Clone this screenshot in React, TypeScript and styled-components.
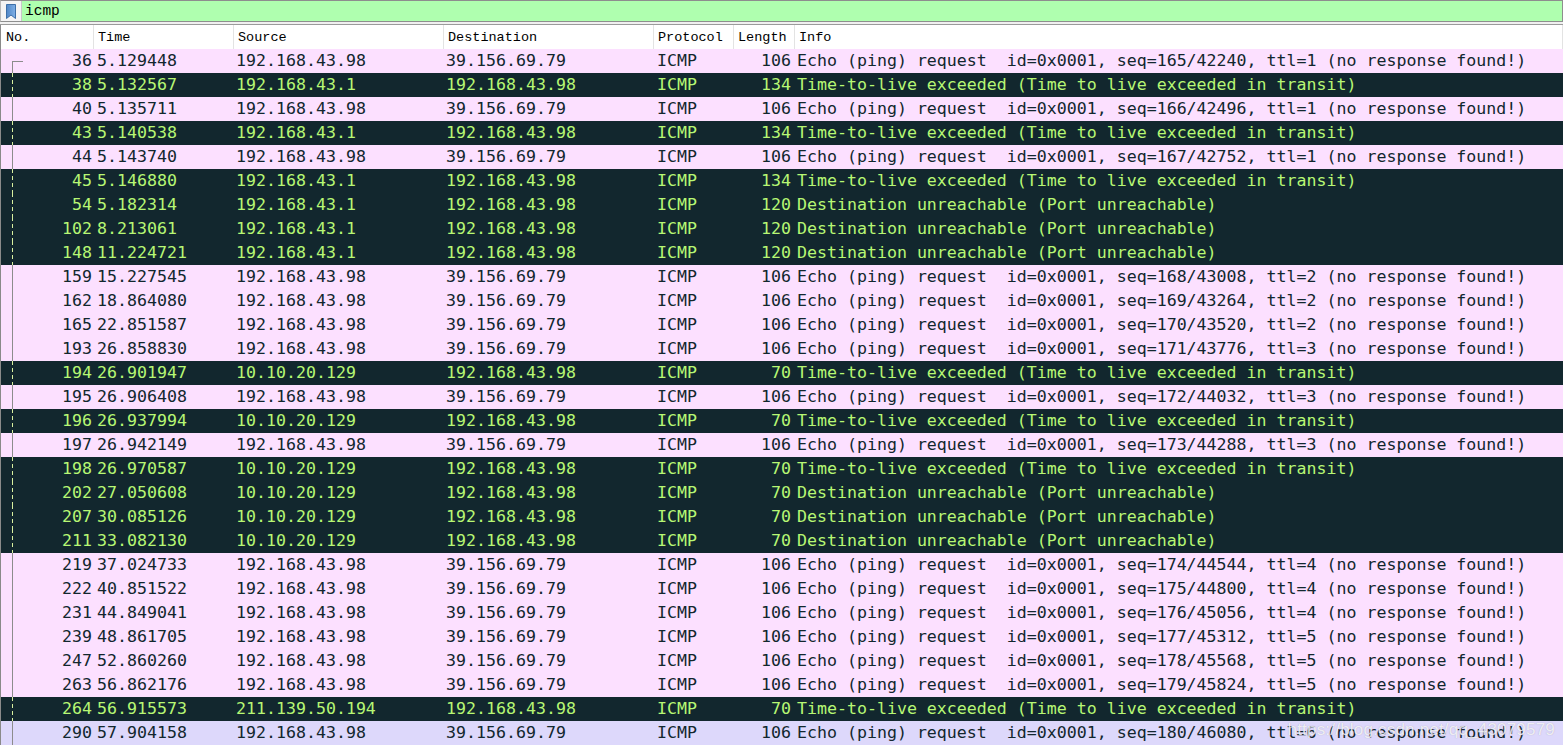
import * as React from "react";
import styled, { createGlobalStyle, css } from "styled-components";

const GlobalStyle = createGlobalStyle`
  html, body {
    margin: 0;
    padding: 0;
    background: #ffffff;
    overflow: hidden;
  }
`;

const mono = `"DejaVu Sans Mono", "Liberation Mono", monospace`;
const headMono = `"Liberation Mono", "DejaVu Sans Mono", monospace`;

const columns = "93px 140px 210px 210px 80px 61px 1fr";

const Page = styled.div`
  width: 1563px;
  height: 745px;
  display: flex;
  flex-direction: column;
  position: relative;
`;

const FilterBar = styled.div`
  height: 20px;
  display: flex;
  border: 1px solid #8e8e8e;
  border-left-color: #b8b8b8;
`;

const BookmarkButton = styled.div`
  width: 20px;
  display: flex;
  align-items: center;
  justify-content: center;
  background: #f4f4f4;
  border-right: 1px solid #c8c8c8;
`;

const FilterInput = styled.div`
  flex: 1;
  background: #afffaf;
  font-family: ${headMono};
  font-size: 14.5px;
  line-height: 20px;
  padding-left: 3px;
  color: #000;
`;

const Divider = styled.div`
  height: 2px;
  background: #f0f0f0;
  border-bottom: 1px solid #9a9a9a;
`;

const Table = styled.div`
  flex: 1;
  display: flex;
  flex-direction: column;
  border-left: 1px solid #8a8a8a;
  overflow: hidden;
`;

const HeaderRow = styled.div`
  display: grid;
  grid-template-columns: ${columns};
  height: 24px;
  flex-shrink: 0;
  background: #ffffff;
  font-family: ${headMono};
  font-size: 13.5px;
  color: #000;
`;

const HeaderCell = styled.div<{ $pad?: number }>`
  padding-left: ${(p) => p.$pad ?? 4}px;
  line-height: 25px;
  border-right: 1px solid #e3e3e3;
  white-space: nowrap;
  overflow: hidden;
`;

type Kind = "echo" | "err" | "sel";

const rowColors: Record<Kind, { bg: string; fg: string }> = {
  echo: { bg: "#fce0ff", fg: "#12272e" },
  err: { bg: "#12272e", fg: "#b7f774" },
  sel: { bg: "#ddd8fb", fg: "#12272e" },
};

const Row = styled.div<{ $kind: Kind }>`
  display: grid;
  grid-template-columns: ${columns};
  height: 24px;
  flex-shrink: 0;
  background: ${(p) => rowColors[p.$kind].bg};
  color: ${(p) => rowColors[p.$kind].fg};
  font-family: ${mono};
  font-size: 16.6px;
  line-height: 24px;
`;

const Cell = styled.div<{ $right?: boolean; $pad?: number }>`
  white-space: pre;
  overflow: hidden;
  padding-left: ${(p) => (p.$right ? 0 : p.$pad ?? 2)}px;
  padding-right: ${(p) => (p.$right ? p.$pad ?? 3 : 0)}px;
  text-align: ${(p) => (p.$right ? "right" : "left")};
`;

const NoCell = styled(Cell)<{ $first?: boolean; $dark?: boolean }>`
  position: relative;

  &::before {
    content: "";
    position: absolute;
    left: 11px;
    bottom: 0;
    top: ${(p) => (p.$first ? "12px" : "0")};
    width: 1px;
    ${(p) =>
      p.$dark
        ? css`
            background: repeating-linear-gradient(
              to bottom,
              #d8f0a0 0 4px,
              transparent 4px 7px
            );
          `
        : css`
            background: #8c8c8c;
          `}
  }

  ${(p) =>
    p.$first &&
    css`
      &::after {
        content: "";
        position: absolute;
        left: 11px;
        top: 12px;
        width: 11px;
        height: 1px;
        background: #8c8c8c;
      }
    `}
`;

const Watermark = styled.div`
  position: absolute;
  right: 8px;
  bottom: 5px;
  font-family: "Liberation Sans", Arial, sans-serif;
  font-size: 17px;
  color: rgba(255, 255, 255, 0.8);
  text-shadow: 0 0 1px rgba(120, 120, 140, 0.5);
  letter-spacing: 0.2px;
  pointer-events: none;
`;

type Packet = [number, string, string, string, number, string, Kind];

const ME = "192.168.43.98";
const DST = "39.156.69.79";
const GW = "192.168.43.1";
const HOP = "10.10.20.129";
const TTLX = "Time-to-live exceeded (Time to live exceeded in transit)";
const UNR = "Destination unreachable (Port unreachable)";
const echo = (seq: number, id: number, ttl: number) =>
  `Echo (ping) request  id=0x0001, seq=${seq}/${id}, ttl=${ttl} (no response found!)`;

const packets: Packet[] = [
  [36, "5.129448", ME, DST, 106, echo(165, 42240, 1), "echo"],
  [38, "5.132567", GW, ME, 134, TTLX, "err"],
  [40, "5.135711", ME, DST, 106, echo(166, 42496, 1), "echo"],
  [43, "5.140538", GW, ME, 134, TTLX, "err"],
  [44, "5.143740", ME, DST, 106, echo(167, 42752, 1), "echo"],
  [45, "5.146880", GW, ME, 134, TTLX, "err"],
  [54, "5.182314", GW, ME, 120, UNR, "err"],
  [102, "8.213061", GW, ME, 120, UNR, "err"],
  [148, "11.224721", GW, ME, 120, UNR, "err"],
  [159, "15.227545", ME, DST, 106, echo(168, 43008, 2), "echo"],
  [162, "18.864080", ME, DST, 106, echo(169, 43264, 2), "echo"],
  [165, "22.851587", ME, DST, 106, echo(170, 43520, 2), "echo"],
  [193, "26.858830", ME, DST, 106, echo(171, 43776, 3), "echo"],
  [194, "26.901947", HOP, ME, 70, TTLX, "err"],
  [195, "26.906408", ME, DST, 106, echo(172, 44032, 3), "echo"],
  [196, "26.937994", HOP, ME, 70, TTLX, "err"],
  [197, "26.942149", ME, DST, 106, echo(173, 44288, 3), "echo"],
  [198, "26.970587", HOP, ME, 70, TTLX, "err"],
  [202, "27.050608", HOP, ME, 70, UNR, "err"],
  [207, "30.085126", HOP, ME, 70, UNR, "err"],
  [211, "33.082130", HOP, ME, 70, UNR, "err"],
  [219, "37.024733", ME, DST, 106, echo(174, 44544, 4), "echo"],
  [222, "40.851522", ME, DST, 106, echo(175, 44800, 4), "echo"],
  [231, "44.849041", ME, DST, 106, echo(176, 45056, 4), "echo"],
  [239, "48.861705", ME, DST, 106, echo(177, 45312, 5), "echo"],
  [247, "52.860260", ME, DST, 106, echo(178, 45568, 5), "echo"],
  [263, "56.862176", ME, DST, 106, echo(179, 45824, 5), "echo"],
  [264, "56.915573", "211.139.50.194", ME, 70, TTLX, "err"],
  [290, "57.904158", ME, DST, 106, echo(180, 46080, 6), "sel"],
];

const BookmarkIcon = () => (
  <svg width="10" height="15" viewBox="0 0 10 15">
    <defs>
      <linearGradient id="bm" x1="0" x2="1" y1="0" y2="0">
        <stop offset="0" stopColor="#4f86c6" />
        <stop offset="1" stopColor="#7fb0e6" />
      </linearGradient>
    </defs>
    <path d="M0.5 0.5 H9.5 V14.5 L5 11 L0.5 14.5 Z" fill="url(#bm)" stroke="#3d6fa8" strokeWidth="1" />
  </svg>
);

const headers = ["No.", "Time", "Source", "Destination", "Protocol", "Length", "Info"];

const App = () => (
  <Page>
    <GlobalStyle />
    <FilterBar>
      <BookmarkButton>
        <BookmarkIcon />
      </BookmarkButton>
      <FilterInput>icmp</FilterInput>
    </FilterBar>
    <Divider />
    <Table>
      <HeaderRow>
        {headers.map((h, i) => (
          <HeaderCell key={h} $pad={i === 0 ? 5 : 4}>
            {h}
          </HeaderCell>
        ))}
      </HeaderRow>
      {packets.map(([no, time, src, dst, len, info, kind], i) => (
        <Row key={no} $kind={kind}>
          <NoCell $right $pad={2} $first={i === 0} $dark={kind === "err"}>
            {no}
          </NoCell>
          <Cell $pad={3}>{time}</Cell>
          <Cell $pad={2}>{src}</Cell>
          <Cell $pad={2}>{dst}</Cell>
          <Cell $pad={3}>ICMP</Cell>
          <Cell $right $pad={4}>
            {len}
          </Cell>
          <Cell $pad={2}>{info}</Cell>
        </Row>
      ))}
    </Table>
    <Watermark>https://blog.csdn.net/qq_43079579</Watermark>
  </Page>
);

export default App;
